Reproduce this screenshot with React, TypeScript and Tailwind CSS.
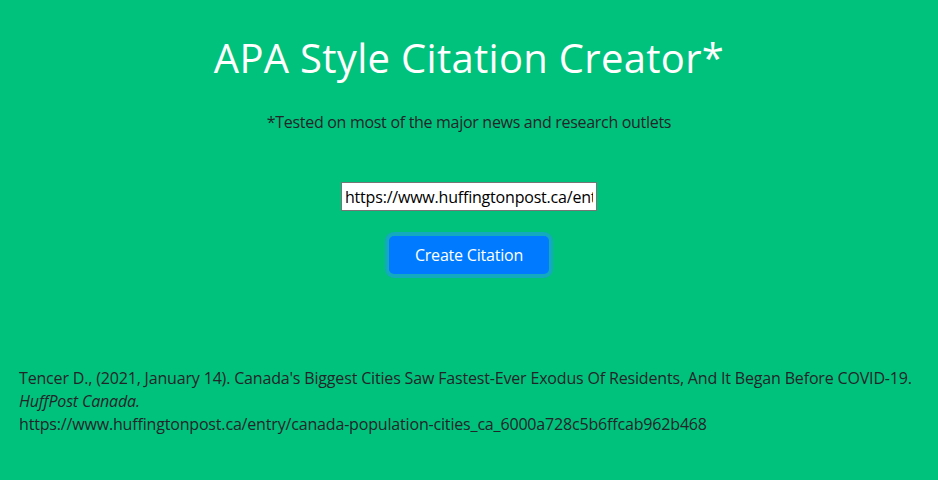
export default function App() {
  return (
    <div className="min-h-[480px] w-full bg-[#00c27c] text-[#212529]" style={{ fontFamily: '"Open Sans", sans-serif' }}>
      <div className="flex flex-col items-center pt-[34px]">
        <h1 className="text-[40px] leading-[48px] font-normal text-white tracking-[0.3px]">APA Style Citation Creator*</h1>
        <p className="mt-[28px] text-[16px] leading-6 tracking-[-0.3px]">*Tested on most of the major news and research outlets</p>
        <input
          className="mt-[48px] h-[29px] w-[256px] border border-[#767676] bg-white px-[3px] text-[16px] text-black outline-none tracking-[-0.2px]"
          defaultValue="https://www.huffingtonpost.ca/entry/canada-population-cities_ca_6000a728c5b6ffcab962b468"
        />
        <button className="mt-[25px] h-[38px] w-[160px] rounded-[5px] bg-[#007bff] text-[16px] text-white tracking-[-0.2px] shadow-[0_0_0_4px_rgba(38,143,255,0.5)]">
          Create Citation
        </button>
      </div>
      <div className="mt-[93px] px-[19px] text-[16px] leading-[23px] tracking-[-0.17px]">
        <div>Tencer D., (2021, January 14). Canada's Biggest Cities Saw Fastest-Ever Exodus Of Residents, And It Began Before COVID-19.</div>
        <div className="italic">HuffPost Canada.</div>
        <div>https://www.huffingtonpost.ca/entry/canada-population-cities_ca_6000a728c5b6ffcab962b468</div>
      </div>
    </div>
  );
}
